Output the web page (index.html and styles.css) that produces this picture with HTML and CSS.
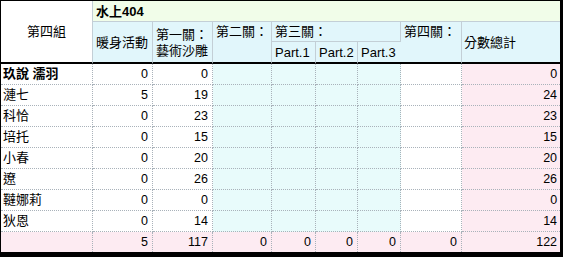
FILE: index.html
```html
<!DOCTYPE html>
<html lang="zh-Hant">
<head>
<meta charset="utf-8">
<title>水上404</title>
<link rel="stylesheet" href="styles.css">
</head>
<body>
<div class="frame">
<table class="score">
  <colgroup>
    <col class="c-name"><col class="c-w"><col class="c-w"><col class="c-2">
    <col class="c-p1"><col class="c-p2"><col class="c-p3"><col class="c-4"><col class="c-total">
  </colgroup>
  <thead>
    <tr class="h1">
      <th class="group" rowspan="3">第四組</th>
      <th class="title" colspan="8">水上404</th>
    </tr>
    <tr class="h2">
      <th class="mid" rowspan="2">暖身活動</th>
      <th class="mid two" rowspan="2">第一關：<br>藝術沙雕</th>
      <th class="top" rowspan="2">第二關：</th>
      <th class="top" colspan="3">第三關：</th>
      <th class="top" rowspan="2">第四關：</th>
      <th class="mid last" rowspan="2">分數總計</th>
    </tr>
    <tr class="h3">
      <th class="part">Part.1</th>
      <th class="part">Part.2</th>
      <th class="part">Part.3</th>
    </tr>
  </thead>
  <tbody>
    <tr><td class="name bold">玖說 濡羽</td><td>0</td><td>0</td><td class="cy"></td><td class="cy"></td><td class="cy"></td><td class="cy"></td><td></td><td class="pk">0</td></tr>
    <tr><td class="name">漣七</td><td>5</td><td>19</td><td class="cy"></td><td class="cy"></td><td class="cy"></td><td class="cy"></td><td></td><td class="pk">24</td></tr>
    <tr><td class="name">科恰</td><td>0</td><td>23</td><td class="cy"></td><td class="cy"></td><td class="cy"></td><td class="cy"></td><td></td><td class="pk">23</td></tr>
    <tr><td class="name">培托</td><td>0</td><td>15</td><td class="cy"></td><td class="cy"></td><td class="cy"></td><td class="cy"></td><td></td><td class="pk">15</td></tr>
    <tr><td class="name">小春</td><td>0</td><td>20</td><td class="cy"></td><td class="cy"></td><td class="cy"></td><td class="cy"></td><td></td><td class="pk">20</td></tr>
    <tr><td class="name">遼</td><td>0</td><td>26</td><td class="cy"></td><td class="cy"></td><td class="cy"></td><td class="cy"></td><td></td><td class="pk">26</td></tr>
    <tr><td class="name">韃娜莉</td><td>0</td><td>0</td><td class="cy"></td><td class="cy"></td><td class="cy"></td><td class="cy"></td><td></td><td class="pk">0</td></tr>
    <tr><td class="name">狄恩</td><td>0</td><td>14</td><td class="cy"></td><td class="cy"></td><td class="cy"></td><td class="cy"></td><td></td><td class="pk">14</td></tr>
    <tr class="sum"><td class="name"></td><td>5</td><td>117</td><td>0</td><td>0</td><td>0</td><td>0</td><td>0</td><td>122</td></tr>
  </tbody>
</table>
</div>
</body>
</html>
```

FILE: styles.css
```css
html, body {
  margin: 0;
  padding: 0;
  background: #000;
}
body {
  width: 563px;
  height: 257px;
  overflow: hidden;
}
.frame {
  display: inline-block;
  vertical-align: top;
  border-top: 1px solid #000;
  border-left: 1px solid #000;
  border-right: 3px solid #000;
  border-bottom: 5px solid #000;
  background: #fff;
}
.score {
  width: 559px;
  table-layout: fixed;
  border-collapse: separate;
  border-spacing: 0;
  font-family: "Liberation Sans", Arial, "Noto Sans CJK TC", sans-serif;
  font-size: 12.5px;
  color: #000;
}
.c-name { width: 92px; }
.c-w { width: 60px; }
.c-2 { width: 59px; }
.c-p1 { width: 44px; }
.c-p2 { width: 42px; }
.c-p3 { width: 43px; }
.c-4 { width: 61px; }
.c-total { width: 98px; }

.score th {
  font-weight: normal;
  text-align: left;
  padding: 0 0 0 3px;
  border-right: 1px solid #c3cfd6;
  border-bottom: 1px solid #c3cfd6;
  background: #e1f6fb;
  font-family: "Liberation Sans", Arial, "Noto Sans CJK TC", sans-serif;
  font-size: 13px;
  line-height: 19px;
  white-space: nowrap;
  overflow: hidden;
}
.score th:last-child { border-right: none; }
.score .h1 th { height: 20px; }
.score .h2 th { height: 19px; }
.score .h3 th { height: 20px; }

.score th.group {
  background: #fff;
  text-align: center;
  padding: 0;
  vertical-align: middle;
  border-right: 1px solid #c3cfd6;
  border-bottom: 2px solid #000;
}
.score th.title {
  background: #f1fde9;
  font-weight: bold;
  vertical-align: middle;
}
.score th.top { vertical-align: top; }
.score th.mid { vertical-align: middle; border-bottom: 2px solid #000; }
.score th.top[rowspan] { border-bottom: 2px solid #000; }
.score th.two { line-height: 16px; padding-top: 2px; }
.score th.part {
  font-size: 13px;
  padding-left: 3px;
  border-bottom: 2px solid #000;
}
.score th.last { border-right: none; padding-left: 2px; }

.score td {
  height: 20px;
  padding: 0 4px 0 2px;
  text-align: right;
  vertical-align: middle;
  line-height: 20px;
  border-right: 1px dotted #a9b2ba;
  border-bottom: 1px dotted #a9b2ba;
  white-space: nowrap;
  overflow: hidden;
}
.score td:last-child { border-right: none; padding-right: 3px; }
.score td.name {
  text-align: left;
  font-size: 13px;
  font-family: "Liberation Sans", Arial, "Noto Sans CJK TC", sans-serif;
}
.score td.bold { font-weight: bold; }
.score td.cy { background: #e8fbfb; }
.score td.pk { background: #fdebf2; }
.score tr.sum td {
  background: #fdebf2;
  border-bottom: none;
}
```
